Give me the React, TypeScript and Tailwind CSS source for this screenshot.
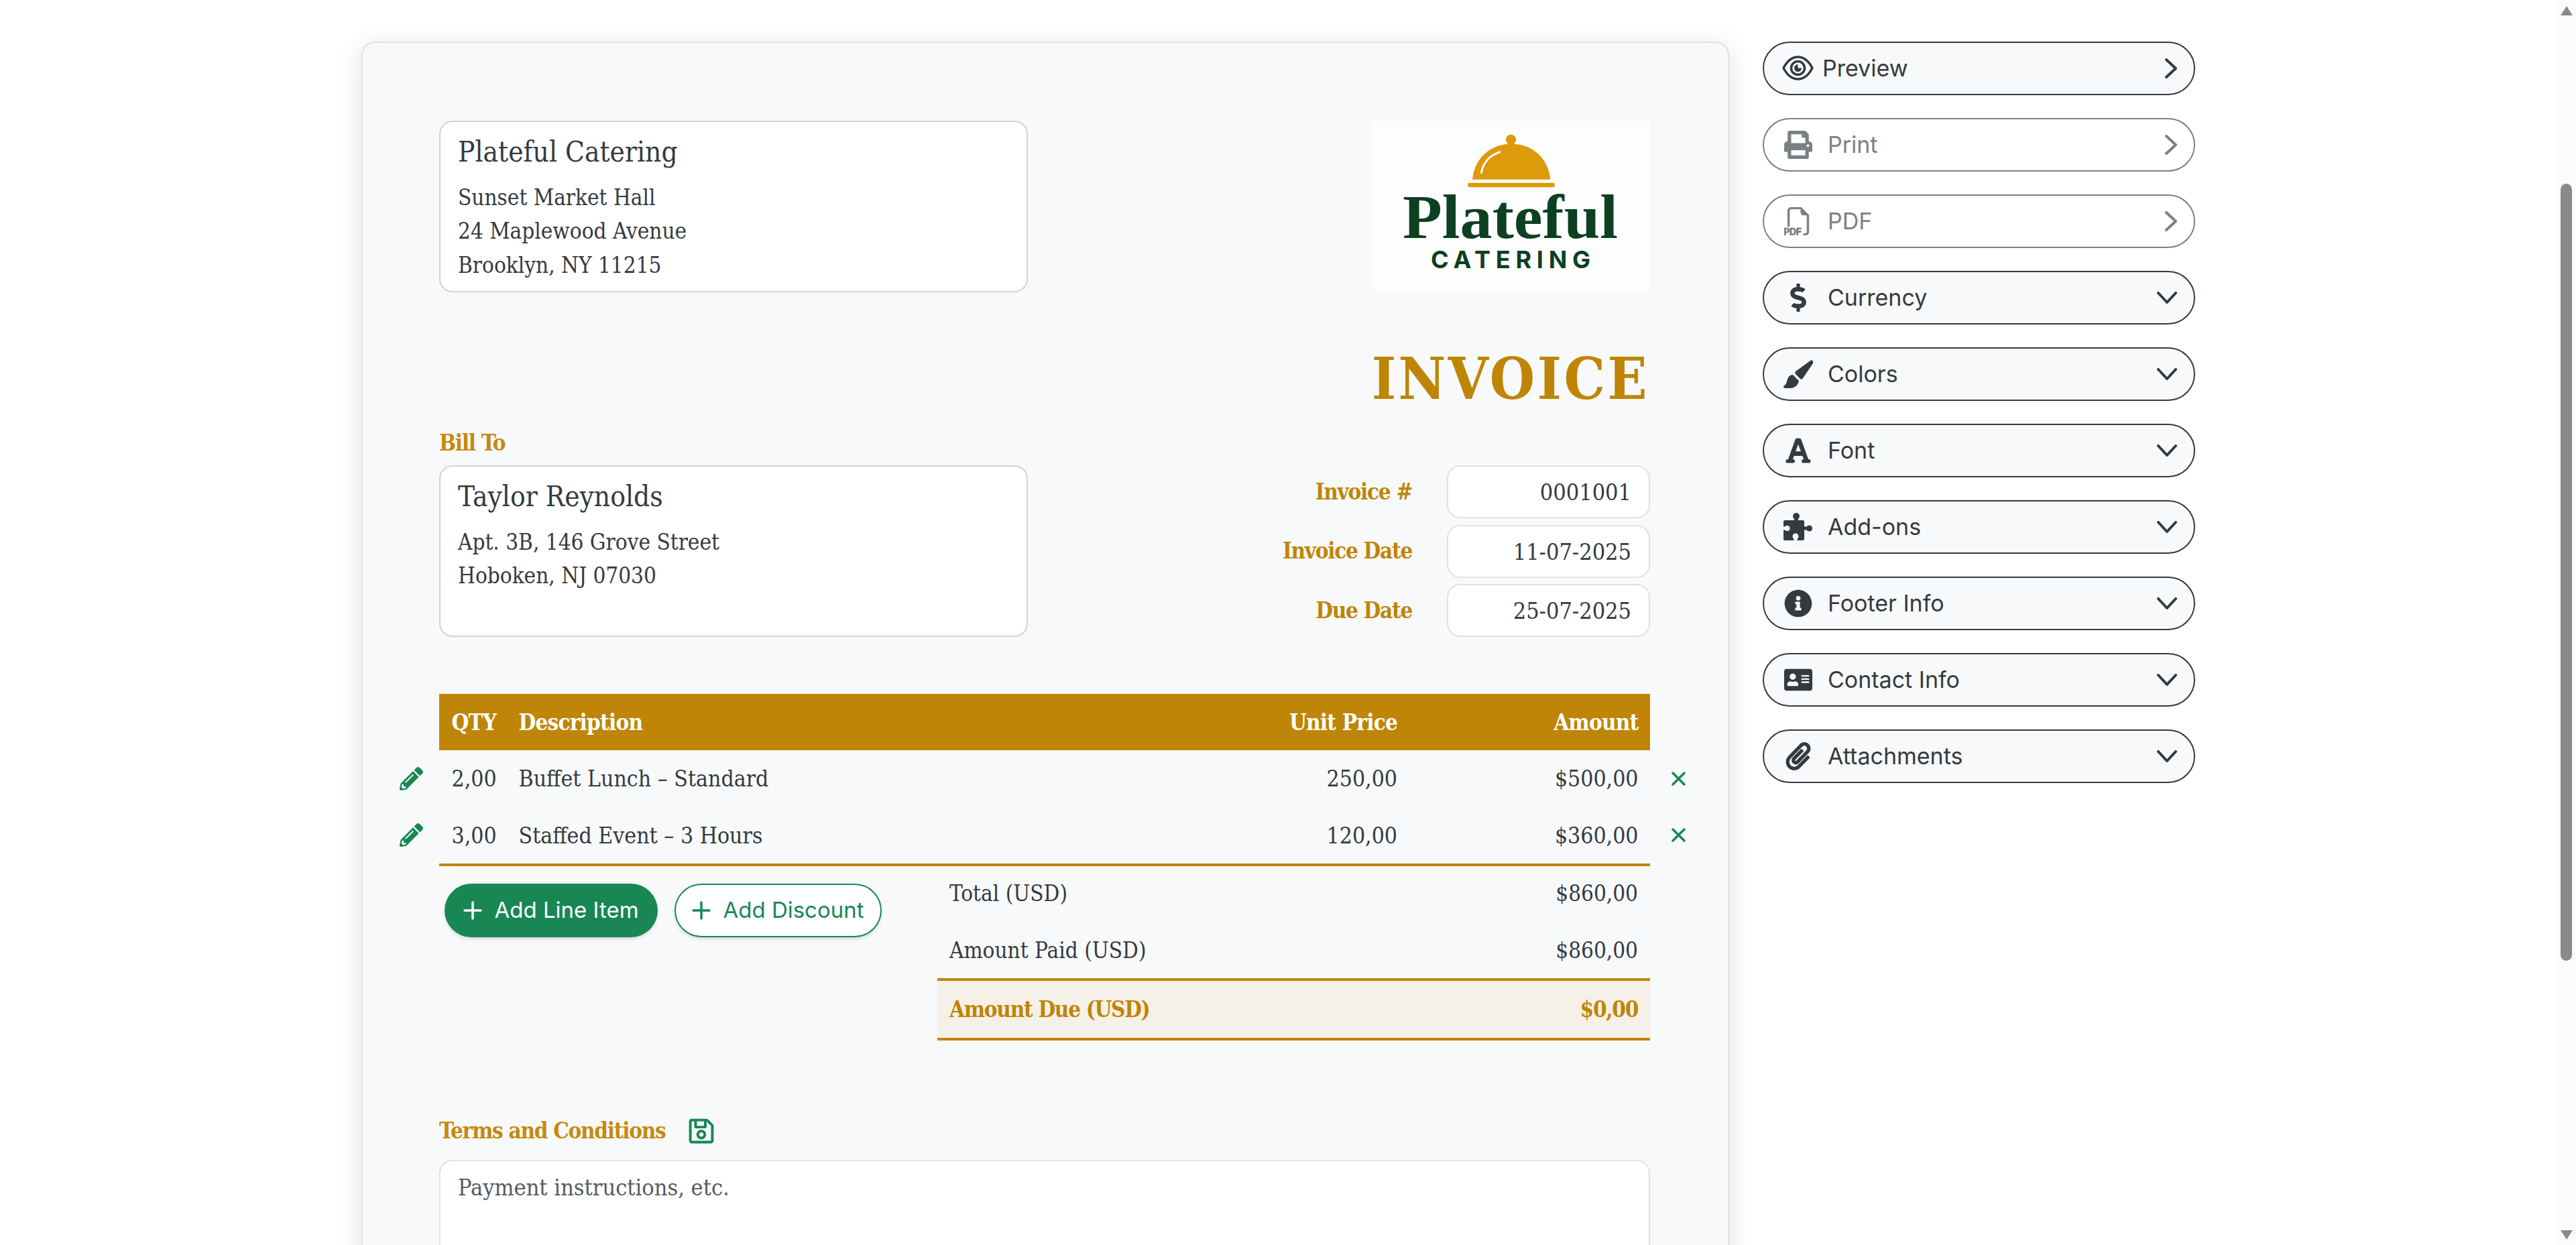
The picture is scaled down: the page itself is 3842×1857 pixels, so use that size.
import { IconType } from "react-icons";
import {
  FaPrint,
  FaDollarSign,
  FaFont,
  FaInfoCircle,
  FaAddressCard,
  FaPaperclip,
  FaPencilAlt,
  FaRegSave,
} from "react-icons/fa";
import { BsFiletypePdf } from "react-icons/bs";

function Chevron({ down }: { down?: boolean }) {
  if (down) {
    return (
      <svg viewBox="0 0 30 18" className="h-[18px] w-[30px]" fill="none" stroke="currentColor" strokeWidth="4" strokeLinecap="round" strokeLinejoin="round">
        <path d="M2 2 L15 16 L28 2" />
      </svg>
    );
  }
  return (
    <svg viewBox="0 0 18 30" className="h-[30px] w-[18px]" fill="none" stroke="currentColor" strokeWidth="4" strokeLinecap="round" strokeLinejoin="round">
      <path d="M2 2 L16 15 L2 28" />
    </svg>
  );
}

// these three differ from the FA5 glyphs, so they are drawn by hand
function EyeIcon() {
  return (
    <svg viewBox="0 0 47 37" className="h-[37px] w-[47px]" fill="none" stroke="currentColor" strokeWidth="3.5">
      <path d="M2 18.5 C8 7 15 2 23.5 2 C32 2 39 7 45 18.5 C39 30 32 35 23.5 35 C15 35 8 30 2 18.5 Z" strokeLinejoin="round" />
      <circle cx="23.5" cy="18.5" r="10" />
      <path d="M23.5 13 A5.5 5.5 0 1 0 29 18.5 L23.5 18.5 Z" fill="currentColor" stroke="none" />
    </svg>
  );
}

function BrushIcon() {
  return (
    <svg viewBox="0 0 44 42" className="h-[42px] w-[44px]" fill="currentColor">
      <path d="M40 1 C43 -1 45 2 44 5 L29 27 C28 29 26 29 25 28 L18 21 C17 20 17 18 18 17 Z" />
      <path d="M14 22 L23 31 C22 36 18 42 10 42 L3 42 C0 42 -1 39 1 38 C5 36 4 33 6 29 C7 25 10 22 14 22 Z" />
    </svg>
  );
}

function PuzzleIcon() {
  return (
    <svg viewBox="0 0 43 41" className="h-[41px] w-[43px]" fill="currentColor">
      <rect x="0" y="11" width="31" height="30" rx="2" />
      <circle cx="19" cy="5" r="5" />
      <rect x="16" y="7" width="6" height="7" />
      <rect x="29" y="20.5" width="8" height="5" />
      <circle cx="38.5" cy="23" r="4.5" />
      <circle cx="5.5" cy="23" r="4" fill="#f8f9fa" />
      <rect x="0" y="20.5" width="4" height="5" fill="#f8f9fa" />
      <circle cx="18" cy="35" r="4.5" fill="#f8f9fa" />
      <rect x="15.5" y="37" width="5" height="4" fill="#f8f9fa" />
    </svg>
  );
}

const sideItems: { label: string; icon: IconType; kind: "next" | "disabled" | "open" }[] = [
  { label: "Preview", icon: EyeIcon, kind: "next" },
  { label: "Print", icon: FaPrint, kind: "disabled" },
  { label: "PDF", icon: BsFiletypePdf, kind: "disabled" },
  { label: "Currency", icon: FaDollarSign, kind: "open" },
  { label: "Colors", icon: BrushIcon, kind: "open" },
  { label: "Font", icon: FaFont, kind: "open" },
  { label: "Add-ons", icon: PuzzleIcon, kind: "open" },
  { label: "Footer Info", icon: FaInfoCircle, kind: "open" },
  { label: "Contact Info", icon: FaAddressCard, kind: "open" },
  { label: "Attachments", icon: FaPaperclip, kind: "open" },
];

function SideButton({ label, icon: Icon, kind }: (typeof sideItems)[number]) {
  const disabled = kind === "disabled";
  return (
    <div
      className={
        disabled
          ? "flex h-[79.5px] items-center rounded-full border-[2.5px] border-[#7b8085] bg-white pl-[27px] pr-[25px] text-[#7b8085]"
          : "flex h-[79.5px] items-center rounded-full border-[2.5px] border-[#343a40] bg-[#f8f9fa] pl-[27px] pr-[25px] text-[#343a40]"
      }
    >
      <span className="flex h-[47px] w-[47px] items-center justify-center text-[42px]">
        <Icon className={label === "PDF" ? "stroke-current stroke-[0.35]" : ""} />
      </span>
      <span className={label === "Preview" ? "ml-[13px] flex-1 text-[34px] leading-none" : "ml-[21px] flex-1 text-[34px] leading-none"}>
        {label}
      </span>
      <Chevron down={kind === "open"} />
    </div>
  );
}

function Logo() {
  return (
    <div className="h-[254px] w-[413px] bg-[#fdfdfd]">
      <svg viewBox="84 57 1238 761" className="h-full w-full">
        <circle cx="700" cy="142" r="23" fill="#dd9a0a" />
        <path d="M528 320 C535 225 610 160 702 160 C795 160 868 225 876 320 Z" fill="#dd9a0a" />
        <rect x="507" y="335" width="389" height="19" rx="9" fill="#dd9a0a" />
        <path d="M568 290 C575 245 605 212 650 197" fill="none" stroke="#fff" strokeWidth="9" strokeLinecap="round" />
        <text x="216" y="580" textLength="962" lengthAdjust="spacingAndGlyphs" fontFamily="'Liberation Serif', serif" fontWeight="700" fontSize="280" fill="#0d4021">
          Plateful
        </text>
        <text x="342" y="717" textLength="713" fontFamily="Inter, sans-serif" fontWeight="700" fontSize="108" fill="#0d4021">
          CATERING
        </text>
      </svg>
    </div>
  );
}

function MetaRow({ label, value }: { label: string; value: string }) {
  return (
    <div className="flex items-center">
      <span className="mr-[52px] text-[33px] font-bold tracking-[-1.3px] text-[#bf8506]">{label}</span>
      <div className="flex h-[79px] w-[303px] items-center justify-end rounded-[20px] border-[2px] border-[#dee2e6] bg-white pr-[26px] pt-[2px] text-[34px] text-[#343a40]">
        {value}
      </div>
    </div>
  );
}

function LineItem({ qty, desc, price, amount }: { qty: string; desc: string; price: string; amount: string }) {
  return (
    <div className="-ml-[59px] -mr-[54px] flex h-[84.5px] items-center text-[33.5px] text-[#343a40]">
      <span className="w-[59px] text-[35px] text-[#198754]">
        <FaPencilAlt />
      </span>
      <span className="w-[118.5px] pl-[18.5px] pt-[2px]">{qty}</span>
      <span className="flex-1 pt-[2px]">{desc}</span>
      <span className="w-[200px] pt-[2px] text-right">{price}</span>
      <span className="w-[377px] pr-[17.5px] pt-[2px] text-right">{amount}</span>
      <span className="flex w-[54px] justify-end">
        <svg viewBox="0 0 23 21" className="h-[21px] w-[23px]" fill="none" stroke="#198754" strokeWidth="3.5" strokeLinecap="round">
          <path d="M3 2 L20 19 M20 2 L3 19" />
        </svg>
      </span>
    </div>
  );
}

function PlusIcon() {
  return (
    <svg viewBox="0 0 28 28" className="h-[28px] w-[28px]" fill="none" stroke="currentColor" strokeWidth="3.5" strokeLinecap="round">
      <path d="M14 2 V26 M2 14 H26" />
    </svg>
  );
}

export default function App() {
  return (
    <div className="flex h-[1857px] w-[3842px] overflow-hidden bg-white">
      <div className="flex flex-1 items-start gap-[50px] overflow-hidden pl-[539px] pt-[62px]">
        {/* invoice sheet */}
        <div className="h-[1900px] w-[2040px] shrink-0 rounded-[20px] border-[2px] border-[#dee2e6] bg-[#f8f9fa] pl-[114px] pr-[116px] pt-[116px] font-['DejaVu_Serif_Condensed','DejaVu_Serif',serif] shadow-[0_8px_40px_rgba(0,0,0,0.12)]">
          <div className="flex justify-between">
            <div className="h-[256px] w-[878px] rounded-[20px] border-[2.5px] border-[#cfd2d6] bg-white pl-[26px] pt-[12px] text-[#343a40]">
              <div className="text-[42px] leading-[66px]">Plateful Catering</div>
              <div className="mt-[10px] text-[33px] leading-[50.4px]">
                <div>Sunset Market Hall</div>
                <div>24 Maplewood Avenue</div>
                <div>Brooklyn, NY 11215</div>
              </div>
            </div>
            <Logo />
          </div>

          <div className="mt-[79px] pr-[1px] text-right text-[86px] font-bold leading-[100px] tracking-[3.5px] text-[#bf8506]">INVOICE</div>

          <div className="mt-[21px] flex items-end justify-between">
            <div>
              <div className="mb-[8px] text-[33px] font-bold leading-[50px] tracking-[-1.3px] text-[#c48a0e]">Bill To</div>
              <div className="h-[256px] w-[878px] rounded-[20px] border-[2.5px] border-[#cfd2d6] bg-white pl-[26px] pt-[12px] text-[#343a40]">
                <div className="text-[42px] leading-[66px]">Taylor Reynolds</div>
                <div className="mt-[10px] text-[33px] leading-[50.4px]">
                  <div>Apt. 3B, 146 Grove Street</div>
                  <div>Hoboken, NJ 07030</div>
                </div>
              </div>
            </div>
            <div className="flex flex-col items-end gap-[9.5px]">
              <MetaRow label="Invoice #" value="0001001" />
              <MetaRow label="Invoice Date" value="11-07-2025" />
              <MetaRow label="Due Date" value="25-07-2025" />
            </div>
          </div>

          <div className="mt-[85px] flex h-[84px] items-center bg-[#bf8506] pt-[2px] text-[33px] font-bold tracking-[-0.8px] text-white">
            <span className="w-[118.5px] pl-[18.5px]">QTY</span>
            <span className="flex-1">Description</span>
            <span className="w-[200px] text-right">Unit Price</span>
            <span className="w-[377px] pr-[17.5px] text-right">Amount</span>
          </div>
          <LineItem qty="2,00" desc="Buffet Lunch – Standard" price="250,00" amount="$500,00" />
          <LineItem qty="3,00" desc="Staffed Event – 3 Hours" price="120,00" amount="$360,00" />

          <div className="flex border-t-[4px] border-[#bf8506]">
            <div className="flex flex-1 items-start gap-[25px] pl-[8px] pt-[26px] font-['Inter',sans-serif] text-[33px]">
              <div className="flex h-[80px] w-[318px] items-center justify-center gap-[18px] rounded-full bg-[#198754] text-white shadow-md">
                <PlusIcon />
                Add Line Item
              </div>
              <div className="flex h-[80px] w-[309px] items-center justify-center gap-[18px] rounded-full border-[2.5px] border-[#198754] bg-white text-[#198754] shadow-md">
                <PlusIcon />
                Add Discount
              </div>
            </div>
            <div className="w-[1063px] text-[33px] text-[#343a40]">
              <div className="flex h-[80px] items-center justify-between px-[18px] pt-[2px]">
                <span>Total (USD)</span>
                <span>$860,00</span>
              </div>
              <div className="flex h-[87px] items-center justify-between px-[18px] pt-[5px]">
                <span>Amount Paid (USD)</span>
                <span>$860,00</span>
              </div>
              <div className="flex h-[93px] items-center justify-between border-y-[4px] border-[#bf8506] bg-[#f5f0e8] px-[18px] text-[33px] font-bold tracking-[-1.3px] text-[#bf8506]">
                <span>Amount Due (USD)</span>
                <span>$0,00</span>
              </div>
            </div>
          </div>

          <div className="mt-[110px] flex items-center gap-[33px]">
            <span className="text-[33px] font-bold leading-[50px] tracking-[-1.3px] text-[#c48a0e]">Terms and Conditions</span>
            <span className="text-[42px] text-[#198754]">
              <FaRegSave />
            </span>
          </div>
          <div className="mt-[18px] h-[300px] rounded-[20px] border-[2px] border-[#dee2e6] bg-white pl-[26px] pt-[14px] text-[34px] text-[#555a62]">
            Payment instructions, etc.
          </div>
        </div>

        {/* side actions */}
        <div className="flex w-[645px] shrink-0 flex-col gap-[34.5px] font-['Inter',sans-serif]">
          {sideItems.map((item) => (
            <SideButton key={item.label} {...item} />
          ))}
        </div>
      </div>

      {/* page scrollbar */}
      <div className="flex h-full w-[29px] shrink-0 flex-col items-center bg-[#fbfbfb] pt-[9px]">
        <div className="h-0 w-0 border-x-[9px] border-b-[14px] border-x-transparent border-b-[#8a8a8a]" />
        <div className="mt-[251px] h-[1159px] w-[17px] rounded-full bg-[#8a8a8a]" />
        <div className="mt-[402px] h-0 w-0 border-x-[9px] border-t-[14px] border-x-transparent border-t-[#8a8a8a]" />
      </div>
    </div>
  );
}
